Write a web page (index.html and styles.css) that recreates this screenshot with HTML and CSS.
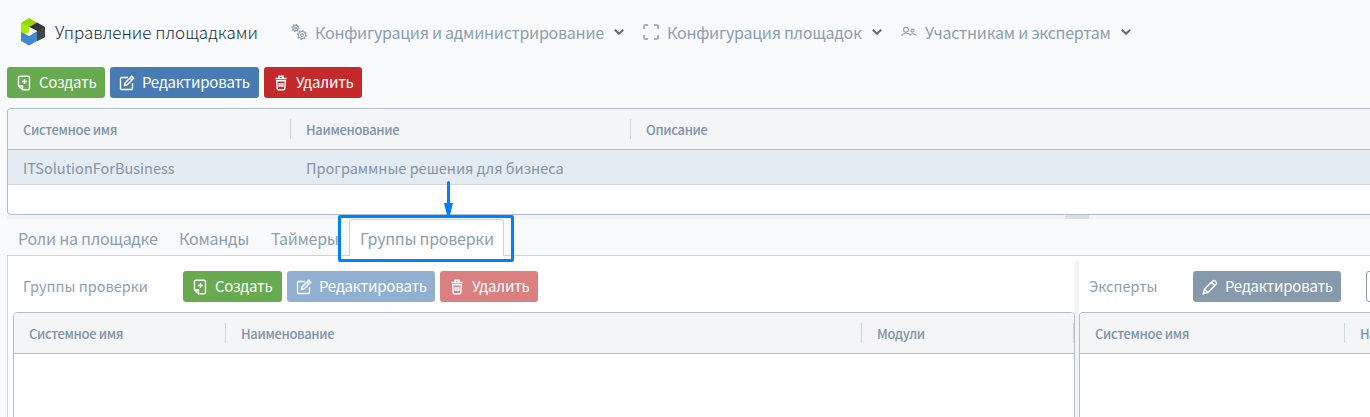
FILE: index.html
```html
<!DOCTYPE html>
<html lang="ru">
<head>
<meta charset="utf-8">
<title>Управление площадками</title>
<link rel="stylesheet" href="styles.css">
</head>
<body>
<svg class="defs" width="0" height="0">
  <symbol id="i-create" viewBox="0 0 16 16"><path d="M6.500 14.800L2.500 11V2.500a1.300 1.300 0 0 1 1.300-1.300h8.400a1.300 1.300 0 0 1 1.300 1.300v11a1.300 1.300 0 0 1-1.300 1.300H6.500V11h-4M8.500 4v5M6 6.500h5"/></symbol>
  <symbol id="i-edit" viewBox="0 0 16 16"><path d="M9 2.500H2.500a1 1 0 0 0-1 1v10a1 1 0 0 0 1 1h10a1 1 0 0 0 1-1V8M5.500 10.500l.6-2.600 6.600-6.600 2 2-6.600 6.600zM11 3l2 2"/></symbol>
  <symbol id="i-trash" viewBox="0 0 16 16"><path d="M2.500 3.500h11M6 3.500V1.200h4v2.300M3.700 5.700h8.600l-.5 8a1.200 1.200 0 0 1-1.200 1H5.400a1.200 1.200 0 0 1-1.200-1zM6.200 8v4M8 8v4M9.800 8v4"/></symbol>
  <symbol id="i-pencil" viewBox="0 0 16 16"><path d="M1.300 14.700l1.200-4.500 8.300-8.300a1.500 1.500 0 0 1 2.200 0l1.100 1.100a1.500 1.500 0 0 1 0 2.200L5.800 13.500zM9.500 3.300l3.200 3.200M2.500 10.200l3.300 3.300"/></symbol>
  <symbol id="i-chevron" viewBox="0 0 10 6"><path d="M.8.800L5 4.800 9.200.800"/></symbol>
</svg>

<header class="topbar">
  <div class="brand">
    <svg class="logo" viewBox="0 0 24 28"><path fill="#96d600" d="M0 5L8 0l8 4.500L8 9v5.500L0 14z"/><path fill="#a4ee00" d="M0 5l8 4v5l-8 4z"/><path fill="#353535" d="M8 9l8-4.500L24 9v10l-8 4V13z"/><path fill="#454545" d="M16 13l8-4v10l-8 4z"/><path fill="#3f89cf" d="M0 14l8 4 8-5v10l-8 4.500L0 23z"/><path fill="#fff" d="M8 9l8 4-8 5z"/></svg>
    <span class="brand-name">Управление площадками</span>
  </div>
  <nav class="menu">
    <div class="menu-item menu-config">
      <svg class="menu-icon" viewBox="0 0 16 16"><circle cx="4.500" cy="4" r="2.600"/><circle cx="4.500" cy="4" r=".8"/><circle class="teeth-small" cx="4.500" cy="4" r="3.500"/><circle cx="11" cy="11" r="3.500"/><circle cx="11" cy="11" r="1.400"/><circle class="teeth-big" cx="11" cy="11" r="4.400"/></svg>
      <span>Конфигурация и администрирование</span>
      <svg class="chevron"><use href="#i-chevron"/></svg>
    </div>
    <div class="menu-item menu-places">
      <svg class="menu-icon frame" viewBox="0 0 16 16"><path d="M1 5V2a1 1 0 0 1 1-1h3M11 1h3a1 1 0 0 1 1 1v3M15 11v3a1 1 0 0 1-1 1h-3M5 15H2a1 1 0 0 1-1-1v-3"/></svg>
      <span>Конфигурация площадок</span>
      <svg class="chevron"><use href="#i-chevron"/></svg>
    </div>
    <div class="menu-item menu-people">
      <svg class="menu-icon" viewBox="0 0 16 16"><path d="M.7 12c0-1.700 2-2.800 4.300-2.800S9.300 10.300 9.300 12M9.300 10.200c2.200-.9 5.200-.3 6 1.300"/><circle cx="5" cy="5.700" r="2.400"/><circle cx="11.500" cy="6.600" r="1.500"/></svg>
      <span>Участникам и экспертам</span>
      <svg class="chevron"><use href="#i-chevron"/></svg>
    </div>
  </nav>
</header>

<div class="toolbar">
  <button class="btn green"><svg><use href="#i-create"/></svg><span>Создать</span></button>
  <button class="btn blue"><svg><use href="#i-edit"/></svg><span>Редактировать</span></button>
  <button class="btn red"><svg><use href="#i-trash"/></svg><span>Удалить</span></button>
</div>

<section class="grid places">
  <div class="grid-head"><div class="th">Системное имя</div><div class="th">Наименование</div><div class="th">Описание</div></div>
  <div class="grid-row"><div>ITSolutionForBusiness</div><div>Программные решения для бизнеса</div><div></div></div>
</section>
<div class="splitter"><div class="handle"></div></div>

<div class="tabs">
  <div class="tab tab-roles">Роли на площадке</div>
  <div class="tab tab-teams">Команды</div>
  <div class="tab tab-timers">Таймеры</div>
  <div class="tab active"><span>Группы проверки</span></div>
</div>

<main class="panel">
  <section class="groups">
    <div class="bar">
      <h2>Группы проверки</h2>
      <button class="btn green"><svg><use href="#i-create"/></svg><span>Создать</span></button>
      <button class="btn blue off"><svg><use href="#i-edit"/></svg><span>Редактировать</span></button>
      <button class="btn red off"><svg><use href="#i-trash"/></svg><span>Удалить</span></button>
    </div>
    <div class="grid groups-grid"><div class="grid-head"><div class="th">Системное имя</div><div class="th">Наименование</div><div class="th">Модули</div></div></div>
  </section>
  <div class="vsplit"></div>
  <section class="experts">
    <div class="bar">
      <h2>Эксперты</h2>
      <button class="btn slate"><svg><use href="#i-pencil"/></svg><span>Редактировать</span></button>
      <button class="btn outline"></button>
    </div>
    <div class="grid experts-grid"><div class="grid-head"><div class="th">Системное имя</div><div class="th">Наименование</div></div></div>
  </section>
</main>

<svg class="callout" viewBox="0 0 176 82"><path d="M110.500 1.500v24" stroke="#007fff" stroke-width="3" stroke-linecap="round"/><path d="M106 22h9l-3 12h-3z" fill="#007fff"/><rect x="1.500" y="35.500" width="173" height="44" rx=".5" fill="none" stroke="#007fff" stroke-width="3"/></svg>
</body>
</html>
```
FILE: styles.css
```css
* { box-sizing: border-box; }
body {
  margin: 0;
  width: 1370px;
  height: 417px;
  overflow: hidden;
  background: #f9fafc;
  color: #8c9fb0;
  font-family: "Noto Sans CJK SC", "Open Sans", sans-serif;
  font-size: 16px;
  line-height: 20px;
  white-space: nowrap;
}
svg { fill: none; stroke: none; flex: none; display: block; }
.defs { position: absolute; }

.topbar { display: flex; height: 67px; }
.brand { display: flex; flex: none; width: 291px; padding: 18px 0 0 21px; }
.logo { width: 24px; height: 28px; }
.brand-name { margin: 4px 0 0 10px; color: #22303c; font-size: 17px; font-weight: 300; }
.menu { display: flex; padding-top: 22px; }
.menu-item { display: flex; flex: none; letter-spacing: -.25px; }
.menu-config { width: 352px; }
.menu-places { width: 258px; }
.menu-people { width: 249px; }
.menu-icon { width: 16px; height: 16px; margin: 2px 8px 0 0; stroke: #8c9fb0; stroke-width: 1.1; }
.frame { stroke-width: 1.6; }
.teeth-small { stroke-width: 1.3; stroke-dasharray: 1.3 1.450; }
.teeth-big { stroke-width: 1.3; stroke-dasharray: 1.6 1.780; }
.menu-item span { flex: 1; }
.chevron { width: 10px; height: 6px; margin: 7px 19px 0 0; stroke: #5f6b7c; stroke-width: 2; }

.toolbar { display: flex; gap: 5px; height: 41px; padding-left: 7px; }
.btn {
  display: flex;
  flex: none;
  align-items: center;
  height: 31px;
  padding: 0 0 0 9px;
  border: 0;
  border-radius: 3px;
  color: #fff;
  font: 400 15px/20px "Noto Sans CJK SC", "Open Sans", sans-serif;
  letter-spacing: -.25px;
}
.btn span { margin-top: -1px; }
.btn svg { width: 16px; height: 16px; margin-right: 7px; stroke: #fff; stroke-width: 1.4; }
.green { width: 98px; background: #68aa50; }
.blue { width: 149px; background: #487bb3; }
.red { width: 98px; background: #c42a2c; }
.blue.off { width: 148px; background: #91b0d1; }
.red.off { background: #dc7f80; }
.slate { width: 148px; background: #8699ad; }
.outline { width: 30px; border: 1px solid #8699ad; background: #fff; }

.grid { border: 1px solid #b0bfcb; border-radius: 4px 0 0 0; background: #fff; overflow: hidden; }
.grid-head { display: grid; height: 41px; padding: 10px 0; border-bottom: 1px solid #b0bfcb; background: #f4f5f7; color: #8094a8; font-size: 13px; font-weight: 500; letter-spacing: -.35px; }
.th { height: 20px; padding-left: 15px; border-right: 1px solid #d0d9e0; line-height: 22px; }
.grid-row { display: grid; height: 35px; border-bottom: 1px solid #cfd8e1; background: #e3ebf3; color: #8495a8; font-size: 14.5px; line-height: 36px; }
.grid-row > div { padding-left: 15px; }
.places { height: 107px; margin-left: 7px; border-right: 0; border-radius: 4px 0 0 4px; }
.places .grid-head, .places .grid-row { grid-template-columns: 283px 340px 1fr; }
.places .th:last-child { border-right: 0; }

.splitter { height: 4px; margin-left: 7px; background: #f2f3f7; }
.handle { width: 24px; height: 4px; margin-left: 1058px; background: #dcdee6; }

.tabs { display: flex; height: 36px; padding-left: 18px; line-height: 38px; letter-spacing: -.27px; }
.tab-roles { width: 161px; }
.tab-teams { width: 92px; }
.tab-timers { width: 78px; }
.tab.active { width: 155px; height: 37px; padding-left: 10px; border: 1px solid #cbd4dc; border-bottom: 0; border-radius: 3px 3px 0 0; background: #fff; line-height: 36px; z-index: 1; }

.panel { display: flex; height: 162px; margin-left: 7px; border: solid #cbd4dc; border-width: 1px 0 0 1px; background: #fff; }
.groups { width: 1067px; padding: 15px 0 0 5px; }
.bar { display: flex; gap: 5px; height: 41px; }
.bar h2 { margin: 0; padding-left: 10px; font-size: 14.5px; font-weight: 400; line-height: 30px; }
.groups h2 { width: 165px; }
.groups .green { width: 99px; }
.groups-grid { height: 120px; border-top-right-radius: 4px; }
.groups-grid .grid-head { grid-template-columns: 212px 636px 212px; }
.vsplit { width: 4px; margin-top: 5px; background: #f2f3f7; }
.experts { flex: 1; min-width: 0; overflow: hidden; padding-top: 15px; }
.experts h2 { width: 109px; flex: none; }
.outline { flex: none; margin-left: 20px; }
.experts-grid { height: 120px; border-right: 0; }
.experts-grid .grid-head { grid-template-columns: 265px 200px; }

.callout { position: absolute; left: 338px; top: 181px; width: 176px; height: 82px; z-index: 2; }
```
